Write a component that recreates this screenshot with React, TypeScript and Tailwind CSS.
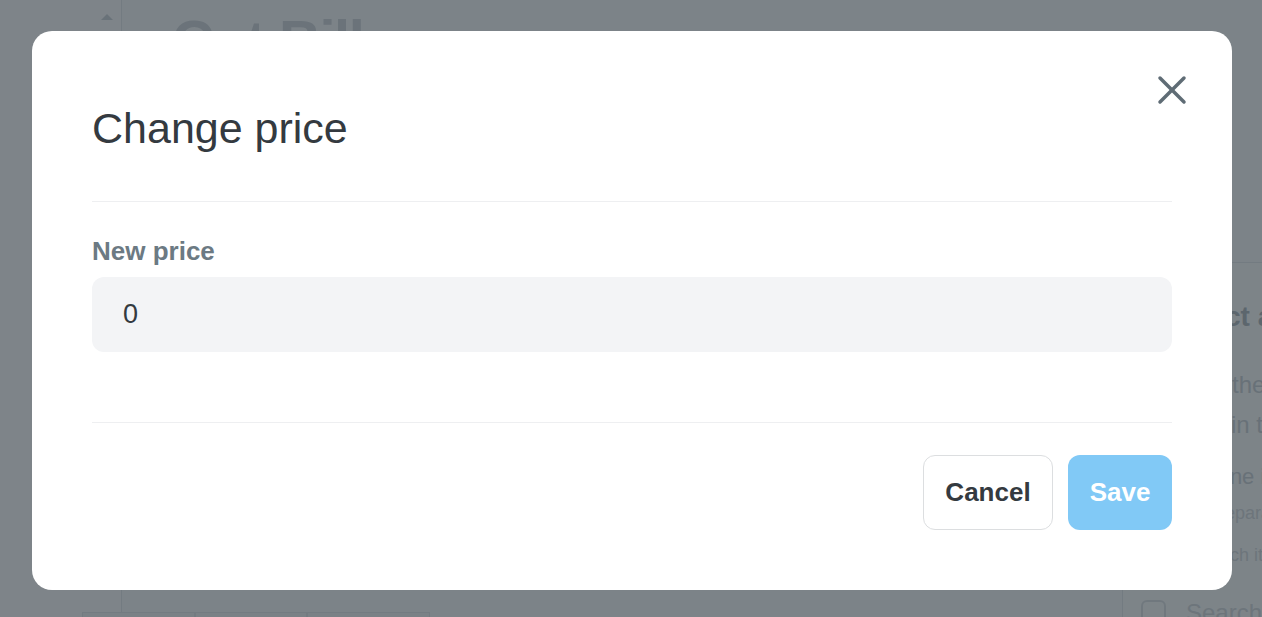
import { X } from "lucide-react";

function PanelLine({ prefix, rest, className, w = "w-[102px]" }: { prefix: string; rest: string; className: string; w?: string }) {
  return (
    <div className={`flex ${className}`}>
      <span className={`${w} shrink-0 text-right`}>{prefix}</span>
      <span>{rest}</span>
    </div>
  );
}

function BackgroundPage() {
  return (
    <div className="absolute inset-0 flex bg-[#f4f6f8] font-['Liberation_Sans',Arial,sans-serif]">
      {/* Sidebar */}
      <div className="w-[122px] shrink-0 border-r border-[#e3e7ea] bg-[#f8f9fa] flex justify-end pr-[8px] pt-[14px]">
        <div className="w-0 h-0 border-l-[6px] border-r-[6px] border-b-[6px] border-l-transparent border-r-transparent border-b-[#cfd5da]" />
      </div>

      {/* Main */}
      <div className="flex-1 flex">
        <div className="flex-1 pl-[50px] pt-[12px] flex flex-col">
          <h1 className="text-[58px] font-bold text-[#d2d7dc] leading-none tracking-tight">Cut Bill</h1>
          <div className="mt-auto -ml-[90px] mb-[-45px] flex">
            <div className="w-[113px] h-[50px] border border-[#e3e7ea] bg-[#f1f3f5]" />
            <div className="w-[112px] h-[50px] border border-[#e3e7ea] bg-[#f1f3f5]" />
            <div className="w-[123px] h-[50px] border border-[#e3e7ea] bg-[#f1f3f5]" />
          </div>
        </div>

        {/* Right panel */}
        <div className="w-[140px] shrink-0 flex flex-col pt-[262px]">
          <div className="border-t border-l border-[#e3e7ea] rounded-tl-[12px] bg-[#f7f8f9] flex-1 pt-[37px] overflow-hidden whitespace-nowrap">
            <PanelLine prefix="Sele" rest="ct a product" className="text-[28px] font-bold leading-[34px] text-[#b4bcc2]" />
            <PanelLine w="w-[109px]" prefix="Enter" rest=" the amount" className="mt-[31px] text-[24px] leading-[40px] text-[#cdd3d8]" />
            <PanelLine w="w-[108px]" prefix="shown " rest="in the list" className="text-[24px] leading-[40px] text-[#cdd3d8]" />
            <PanelLine prefix="L" rest="ine items" className="mt-[17px] text-[22px] leading-[30px] text-[#cdd3d8]" />
            <PanelLine prefix="S" rest="eparate" className="mt-[3px] text-[18px] leading-[36px] text-[#d6dbdf]" />
            <PanelLine w="w-[107px]" prefix="ea" rest="ch item" className="mt-[4px] text-[18px] leading-[40px] text-[#d6dbdf]" />
            <div className="ml-[18px] mt-[23px] flex items-center gap-[20px]">
              <div className="w-[30px] h-[26px] border-2 border-[#dde1e5] rounded-[6px]" />
              <span className="text-[24px] leading-[30px] text-[#d6dbdf]">Search</span>
            </div>
          </div>
        </div>
      </div>
    </div>
  );
}

export default function App() {
  return (
    <div className="relative w-full h-screen overflow-hidden">
      <BackgroundPage />

      {/* Overlay */}
      <div className="absolute inset-0 bg-[#08131c]/[0.51] flex items-start justify-center pt-[31px] pl-[2px]">
        <div className="relative w-[1200px] bg-white rounded-[20px] px-[60px] font-['Liberation_Sans',Arial,sans-serif]">
          <button className="absolute right-[36px] top-[35px] text-[#5f6c75]" aria-label="Close">
            <X className="w-[48px] h-[48px]" strokeWidth={1.75} />
          </button>

          {/* Header */}
          <div className="pt-[72px] pb-[48px] border-b border-[#eeeff1]">
            <h2 className="text-[43px] leading-[50px] font-normal text-[#343a40]">Change price</h2>
          </div>

          {/* Body */}
          <div className="pt-[34px] pb-[70px] border-b border-[#eeeff1]">
            <label className="block text-[26px] leading-[30px] font-bold text-[#6c7a83]">New price</label>
            <div className="mt-[11px] h-[75px] rounded-[12px] bg-[#f3f4f6] flex items-center pl-[31px] pr-[30px]">
              <span className="text-[27px] text-[#343a40]">0</span>
            </div>
          </div>

          {/* Footer */}
          <div className="pt-[32px] pb-[60px] flex justify-end gap-[15px]">
            <button className="h-[75px] w-[130px] rounded-[12px] border border-[#dcdee0] bg-white text-[26px] font-bold text-[#343a40]">
              Cancel
            </button>
            <button className="h-[75px] w-[104px] rounded-[12px] bg-[#81c9f6] text-[26px] font-bold text-white">
              Save
            </button>
          </div>
        </div>
      </div>
    </div>
  );
}
